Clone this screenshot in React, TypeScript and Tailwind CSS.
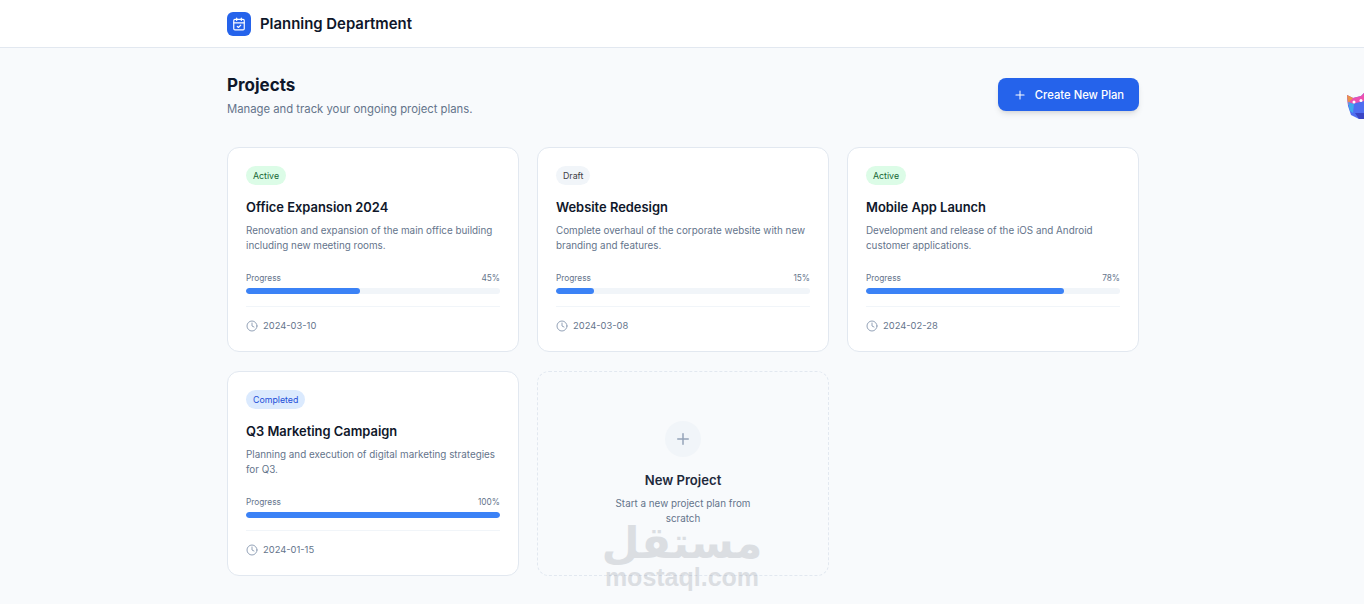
import { CalendarCheck, Clock, Plus } from "lucide-react";

const projects = [
  {
    status: "Active",
    badge: "bg-[#dcfce7] text-[#166534]",
    title: "Office Expansion 2024",
    description: "Renovation and expansion of the main office building including new meeting rooms.",
    progress: 45,
    date: "2024-03-10",
  },
  {
    status: "Draft",
    badge: "bg-[#f1f5f9] text-[#3f3f46]",
    title: "Website Redesign",
    description: "Complete overhaul of the corporate website with new branding and features.",
    progress: 15,
    date: "2024-03-08",
  },
  {
    status: "Active",
    badge: "bg-[#dcfce7] text-[#166534]",
    title: "Mobile App Launch",
    description: "Development and release of the iOS and Android customer applications.",
    progress: 78,
    date: "2024-02-28",
  },
  {
    status: "Completed",
    badge: "bg-[#dbeafe] text-[#1d4ed8]",
    title: "Q3 Marketing Campaign",
    description: "Planning and execution of digital marketing strategies for Q3.",
    progress: 100,
    date: "2024-01-15",
  },
];

function ProjectCard({ project }: { project: (typeof projects)[number] }) {
  return (
    <div className="h-[205px] rounded-xl border border-[#e2e8f0] bg-white px-[18px] pt-[18px]">
      <span className={`block w-fit rounded-full px-[7px] py-0 text-[8.8px] leading-[19px] ${project.badge}`}>
        {project.status}
      </span>
      <h3 className="mt-[13px] text-[12.9px] leading-[20px] font-semibold text-[#0f172a]">{project.title}</h3>
      <p className="mt-[5px] h-[30px] text-[9.85px] leading-[15px] text-[#64748b]">{project.description}</p>
      <div className="mt-[19px] flex justify-between text-[8.3px] leading-[13px] text-[#64748b]">
        <span>Progress</span>
        <span>{project.progress}%</span>
      </div>
      <div className="mt-[3px] h-[6px] overflow-hidden rounded-full bg-[#f1f5f9]">
        <div className="h-full rounded-full bg-[#3b82f6]" style={{ width: `${project.progress}%` }} />
      </div>
      <div className="mt-[12px] flex items-center gap-[5px] border-t border-[#f1f5f9] pt-[11px] text-[9.4px] leading-[15px] text-[#64748b]">
        <Clock className="size-[12px] text-[#94a3b8]" />
        {project.date}
      </div>
    </div>
  );
}

export default function App() {
  return (
    <div className="relative h-[604px] overflow-hidden bg-[#f8fafc] font-['Inter',sans-serif]">
      <header className="h-[48px] border-b border-[#e2e8f0] bg-white">
        <div className="ml-[227px] flex h-[47px] w-[912px] items-center gap-[9px]">
          <div className="flex size-[24px] items-center justify-center rounded-md bg-[#2563eb]">
            <CalendarCheck className="size-[14px] text-white" />
          </div>
          <span className="text-[14.9px] leading-[24px] font-semibold text-[#0f172a]">Planning Department</span>
        </div>
      </header>

      <main className="ml-[227px] w-[912px] pt-[26px]">
        <div className="flex items-start justify-between">
          <div>
            <h1 className="text-[17px] leading-[22px] font-bold text-[#0f172a]">Projects</h1>
            <p className="mt-[4px] text-[11.3px] leading-[18px] text-[#64748b]">Manage and track your ongoing project plans.</p>
          </div>
          <button className="mt-[4px] flex h-[33px] w-[141px] items-center justify-center gap-[8px] rounded-lg bg-[#2563eb] text-[11.25px] leading-[20px] font-medium text-white shadow-md">
            <Plus className="size-[14px]" strokeWidth={1.75} />
            Create New Plan
          </button>
        </div>

        <div className="mt-[29px] grid grid-cols-3 gap-x-[18px] gap-y-[19px]">
          {projects.map((project) => (
            <ProjectCard key={project.title} project={project} />
          ))}
          <div className="flex h-[205px] flex-col items-center rounded-xl border border-dashed border-[#e2e8f0] pt-[49px]">
            <div className="flex size-[36px] items-center justify-center rounded-full bg-[#f1f5f9]">
              <Plus className="size-[18px] text-[#94a3b8]" />
            </div>
            <h3 className="mt-[13px] text-[13.1px] leading-[20px] font-semibold text-[#1e293b]">New Project</h3>
            <p className="mt-[6px] w-[150px] text-center text-[9.85px] leading-[15px] text-[#64748b]">
              Start a new project plan from scratch
            </p>
          </div>
        </div>
      </main>

      {/* site watermark */}
      <div className="pointer-events-none absolute top-[521px] left-[600px] flex w-[164px] flex-col items-center text-[#6b7280] opacity-20">
        <span dir="rtl" className="font-['DejaVu_Sans',sans-serif] text-[44px] leading-[44px] font-bold">مستقل</span>
        <span className="font-['Liberation_Sans',sans-serif] text-[25px] leading-[24px] font-bold">mostaql.com</span>
      </div>

      {/* floating mascot, cut off by the window edge */}
      <svg className="absolute top-[91px] left-[1347px]" width="17" height="30" viewBox="0 0 17 30">
        <path d="M0 4 L6 7 L14 5 L17 2 V28 H12 L4 24 L1 15 Z" fill="#4f6ef0" />
        <path d="M0 4 L6 7 L14 5 L17 2 V10 L1 14 Z" fill="#ec4fb0" />
        <path d="M0 4 L6 7 L1 12 Z" fill="#e8944a" />
        <path d="M1 11 L7 13 L6 22 L3 20 Z" fill="#3fa8ec" />
        <circle cx="7" cy="11" r="1.5" fill="#fff" />
        <circle cx="14" cy="9.5" r="1.5" fill="#fff" />
        <path d="M8 22 H17 V28 H12 Z" fill="#3b45c4" />
      </svg>
    </div>
  );
}
